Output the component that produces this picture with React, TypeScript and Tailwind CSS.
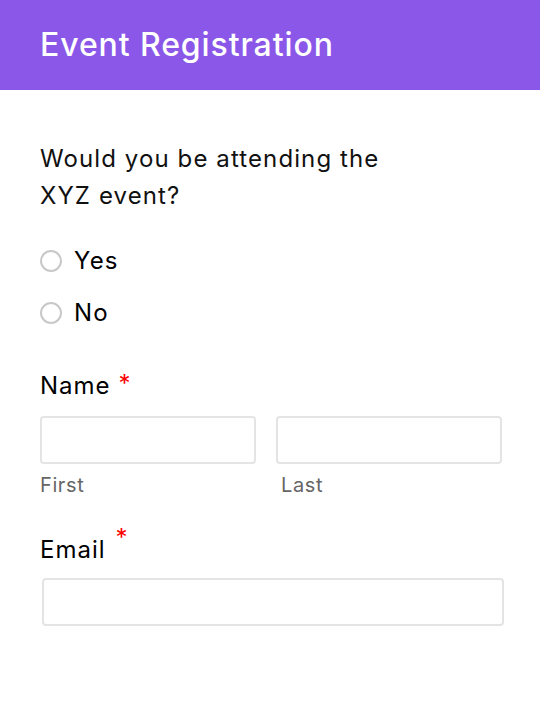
import React, { useState } from 'react';

const font = { fontFamily: '"Inter", "Open Sans", sans-serif' };

export default function App() {
  const [attending, setAttending] = useState<string>('');

  return (
    <div className="min-h-[718px] bg-white text-black" style={font}>
      <header className="h-[90px] bg-[#8a57e8] px-10 flex items-center">
        <h1 className="text-[32px] font-medium text-white tracking-[0.9px]">Event Registration</h1>
      </header>

      <form className="px-10 pt-[50px]">
        <p className="text-[24px] leading-[37px] text-[#111] tracking-[1.1px]">
          Would you be attending the
          <br />
          XYZ event?
        </p>

        <div className="mt-[34px] flex flex-col gap-[26px]">
          {['Yes', 'No'].map(opt => (
            <label key={opt} className="flex items-center gap-3 h-[26px] cursor-pointer">
              <input
                type="radio"
                name="attending"
                checked={attending === opt}
                onChange={() => setAttending(opt)}
                className="appearance-none w-[22px] h-[22px] rounded-full border-2 border-[#c8c8c8] bg-white checked:border-[#8a57e8] checked:border-[6px]"
              />
              <span className="text-[24px] tracking-[1.2px]">{opt}</span>
            </label>
          ))}
        </div>

        <div className="mt-[42px]">
          <div className="text-[24px] tracking-[1px] flex items-start gap-2">
            Name <span className="text-[#ff0000] text-[24px] leading-none mt-1">*</span>
          </div>
          <div className="mt-[12px] grid grid-cols-[216px_226px] gap-5">
            <div>
              <input className="w-full h-12 rounded border-2 border-[#e4e4e4] px-3 outline-none" />
              <div className="mt-[6px] text-[20px] text-[#666] tracking-[0.6px]">First</div>
            </div>
            <div>
              <input className="w-full h-12 rounded border-2 border-[#e4e4e4] px-3 outline-none" />
              <div className="mt-[6px] pl-[5px] text-[20px] text-[#666] tracking-[0.6px]">Last</div>
            </div>
          </div>
        </div>

        <div className="mt-[32px]">
          <div className="text-[24px] tracking-[1px] flex items-start gap-2.5">
            Email <span className="text-[#ff0000] text-[24px] leading-none -mt-1.5">*</span>
          </div>
          <input type="email" className="mt-[10px] ml-[2px] w-[462px] h-12 rounded border-2 border-[#e4e4e4] px-3 outline-none" />
        </div>
      </form>
    </div>
  );
}
